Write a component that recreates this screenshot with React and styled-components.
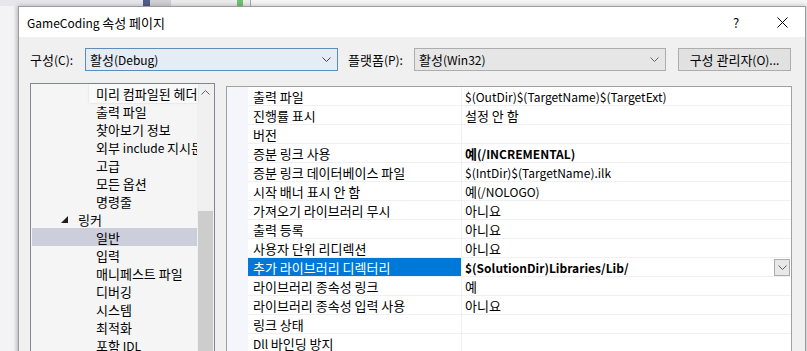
import React from "react";
import styled, { createGlobalStyle } from "styled-components";

const GlobalStyle = createGlobalStyle`
  body {
    margin: 0;
    font-family: "Noto Sans CJK KR", "Noto Sans", sans-serif;
    font-size: 12px;
    color: #000;
  }
`;

const Screen = styled.div`
  width: 807px;
  height: 351px;
  overflow: hidden;
  display: flex;
  flex-direction: column;
  background: #f1f1f4;
`;

const BackStrip = styled.div`
  height: 6px;
  flex: none;
  display: flex;
`;

const Seg = styled.div`
  width: ${(p) => p.$w}px;
  flex: ${(p) => (p.$w ? "none" : "1")};
  background: ${(p) => p.$c};
`;

const Desk = styled.div`
  flex: 1;
  display: flex;
  min-height: 0;
`;

const DeskGap = styled.div`
  width: 18px;
  flex: none;
  background: linear-gradient(90deg, #f3f3f6 0%, #f3f3f6 70%, #e2e2e6 100%);
`;

const Dialog = styled.div`
  width: 788px;
  height: 420px;
  flex: none;
  box-sizing: border-box;
  border: 1px solid #9c9c9c;
  background: #f0f0f0;
  box-shadow: 0 0 5px rgba(0, 0, 0, 0.25);
  display: flex;
  flex-direction: column;
`;

const TitleBar = styled.div`
  height: 30px;
  flex: none;
  background: #fff;
  display: flex;
  align-items: center;
  padding-left: 8px;
`;

const Title = styled.div`
  flex: 1;
`;

const TitleButton = styled.div`
  width: 46px;
  height: 30px;
  display: flex;
  align-items: center;
  justify-content: center;
  font-size: 13px;
`;

const Body = styled.div`
  padding: 11px 13px 0 11px;
  display: flex;
  flex-direction: column;
`;

const ConfigRow = styled.div`
  display: flex;
  align-items: center;
  height: 23px;
`;

const Label = styled.div`
  width: ${(p) => p.$w}px;
  flex: none;
  white-space: nowrap;
`;

const Combo = styled.div`
  width: ${(p) => p.$w}px;
  height: 23px;
  box-sizing: border-box;
  flex: none;
  border: 1px solid ${(p) => (p.$focus ? "#5f8cbd" : "#adadad")};
  background: ${(p) => (p.$focus ? "#e4ecf4" : "#e6e6e6")};
  padding: 0 6px 0 4px;
  display: flex;
  align-items: center;
  justify-content: space-between;
  margin-right: ${(p) => p.$mr || 0}px;
`;

const Button = styled.div`
  margin-left: 12px;
  width: 113px;
  height: 23px;
  box-sizing: border-box;
  border: 1px solid #adadad;
  background: #e1e1e1;
  display: flex;
  align-items: center;
  justify-content: center;
  white-space: nowrap;
`;

const Panels = styled.div`
  display: flex;
  align-items: flex-start;
  gap: 11px;
  margin-top: 12px;
`;

const Tree = styled.div`
  width: 185px;
  height: 300px;
  box-sizing: border-box;
  border: 1px solid #828790;
  background: #f5f5f5;
  display: flex;
  flex: none;
`;

const TreeList = styled.div`
  flex: 1;
  min-width: 0;
  padding-left: 1px;
  display: flex;
  flex-direction: column;
`;

const TreeRow = styled.div`
  height: 18px;
  flex: none;
  display: flex;
  align-items: center;
  white-space: nowrap;
  overflow: ${(p) => (p.$hover ? "visible" : "hidden")};
  position: relative;
  z-index: ${(p) => (p.$hover ? 2 : 0)};
  padding-left: ${(p) => p.$indent}px;
  background: ${(p) => (p.$selected ? "#cccedb" : "transparent")};
`;

const HoverBox = styled.span`
  display: flex;
  align-items: center;
  height: 19px;
  margin-left: -7px;
  padding-left: 7px;
  width: 109px;
  background: #f9f9f9;
  box-shadow: 0 0 2px rgba(0, 0, 0, 0.12);
`;

const Expander = styled.svg`
  width: 7px;
  height: 7px;
  margin-right: 10px;
`;

const ScrollBar = styled.div`
  width: 17px;
  flex: none;
  background: #f0f0f0;
  display: flex;
  flex-direction: column;
`;

const ScrollArrow = styled.div`
  height: 17px;
  flex: none;
  display: flex;
  align-items: center;
  justify-content: center;
`;

const ScrollThumb = styled.div`
  margin: 110px 1px 0;
  flex: 1;
  background: #cdcdcd;
`;

const Grid = styled.div`
  width: 566px;
  height: 300px;
  box-sizing: border-box;
  margin-top: 3px;
  border: 1px solid #a0a0a0;
  background: #fff;
  display: flex;
  flex: none;
`;

const Gutter = styled.div`
  width: 21px;
  flex: none;
  background: #f4f6fb;
`;

const GridRows = styled.div`
  flex: 1;
  display: flex;
  flex-direction: column;
`;

const PropRow = styled.div`
  height: 19px;
  flex: none;
  box-sizing: border-box;
  display: flex;
  border-bottom: 1px solid #eef0f4;
`;

const NameCell = styled.div`
  width: 214px;
  flex: none;
  box-sizing: border-box;
  padding-left: 5px;
  display: flex;
  align-items: center;
  white-space: nowrap;
  border-right: 1px solid #eef0f4;
  background: ${(p) => (p.$selected ? "#0078d7" : "transparent")};
  color: ${(p) => (p.$selected ? "#fff" : "#000")};
`;

const ValueCell = styled.div`
  flex: 1;
  padding-left: 3px;
  display: flex;
  align-items: center;
  justify-content: space-between;
  white-space: nowrap;
  font-weight: ${(p) => (p.$bold ? 700 : 400)};
`;

const DropButton = styled.div`
  width: 16px;
  height: 17px;
  box-sizing: border-box;
  margin-right: 1px;
  border: 1px solid #acacac;
  background: #e8e8e8;
  display: flex;
  align-items: center;
  justify-content: center;
`;

// hangul runs are drawn a touch larger, as Malgun Gothic sits beside Segoe UI
const Ko = styled.span`
  font-size: 13px;
`;

const HANGUL = /([\uac00-\ud7a3][\uac00-\ud7a3 ]*)/;

const Txt = ({ children }) => (
  <span>
    {String(children)
      .split(HANGUL)
      .map((part, i) => (HANGUL.test(part) ? <Ko key={i}>{part}</Ko> : part))}
  </span>
);

const Chevron = ({ color = "#444", up }) => (
  <svg width="9" height="5" viewBox="0 0 9 5">
    <path
      d={up ? "M0.5 4.5 L4.5 0.5 L8.5 4.5" : "M0.5 0.5 L4.5 4.5 L8.5 0.5"}
      fill="none"
      stroke={color}
      strokeWidth="1"
    />
  </svg>
);

const treeItems = [
  { text: "미리 컴파일된 헤더", indent: 64, hover: true },
  { text: "출력 파일", indent: 64 },
  { text: "찾아보기 정보", indent: 64 },
  { text: "외부 include 지시문", indent: 64 },
  { text: "고급", indent: 64 },
  { text: "모든 옵션", indent: 64 },
  { text: "명령줄", indent: 64 },
  { text: "링커", indent: 29, expanded: true },
  { text: "일반", indent: 64, selected: true },
  { text: "입력", indent: 64 },
  { text: "매니페스트 파일", indent: 64 },
  { text: "디버깅", indent: 64 },
  { text: "시스템", indent: 64 },
  { text: "최적화", indent: 64 },
  { text: "포함 IDL", indent: 64 },
];

const props = [
  ["출력 파일", "$(OutDir)$(TargetName)$(TargetExt)"],
  ["진행률 표시", "설정 안 함"],
  ["버전", ""],
  ["증분 링크 사용", "예(/INCREMENTAL)", true],
  ["증분 링크 데이터베이스 파일", "$(IntDir)$(TargetName).ilk"],
  ["시작 배너 표시 안 함", "예(/NOLOGO)"],
  ["가져오기 라이브러리 무시", "아니요"],
  ["출력 등록", "아니요"],
  ["사용자 단위 리디렉션", "아니요"],
  ["추가 라이브러리 디렉터리", "$(SolutionDir)Libraries/Lib/", true, true],
  ["라이브러리 종속성 링크", "예"],
  ["라이브러리 종속성 입력 사용", "아니요"],
  ["링크 상태", ""],
  ["Dll 바인딩 방지", ""],
];

export default function App() {
  return (
    <Screen>
      <GlobalStyle />
      <BackStrip>
        <Seg $w={143} $c="#e6e6ec" />
        <Seg $w={7} $c="#4f5d8e" />
        <Seg $w={21} $c="#d2d2d4" />
        <Seg $w={66} $c="#ececec" />
        <Seg $w={6} $c="#72c072" />
        <Seg $w={7} $c="#ededed" />
        <Seg $w={1} $c="#a8a8a8" />
        <Seg $c="#f5f5f5" />
      </BackStrip>
      <Desk>
        <DeskGap />
        <Dialog>
          <TitleBar>
            <Title>
              <Txt>GameCoding 속성 페이지</Txt>
            </Title>
            <TitleButton>?</TitleButton>
            <TitleButton>
              <svg width="11" height="11" viewBox="0 0 11 11">
                <path d="M0.5 0.5 L10.5 10.5 M10.5 0.5 L0.5 10.5" stroke="#000" strokeWidth="1" />
              </svg>
            </TitleButton>
          </TitleBar>
          <Body>
            <ConfigRow>
              <Label $w={55}>
                <Txt>구성(C):</Txt>
              </Label>
              <Combo $w={253} $focus $mr={10}>
                <Txt>활성(Debug)</Txt>
                <Chevron />
              </Combo>
              <Label $w={66}>
                <Txt>플랫폼(P):</Txt>
              </Label>
              <Combo $w={252}>
                <Txt>활성(Win32)</Txt>
                <Chevron color="#666" />
              </Combo>
              <Button>
                <Txt>구성 관리자(O)...</Txt>
              </Button>
            </ConfigRow>
            <Panels>
              <Tree>
                <TreeList>
                  {treeItems.map((it) => (
                    <TreeRow
                      key={it.text}
                      $indent={it.indent}
                      $selected={it.selected}
                      $hover={it.hover}
                    >
                      {it.expanded && (
                        <Expander viewBox="0 0 7 7">
                          <polygon points="7,0 7,7 0,7" fill="#1e1e1e" />
                        </Expander>
                      )}
                      {it.hover ? (
                        <HoverBox>
                          <Txt>{it.text}</Txt>
                        </HoverBox>
                      ) : (
                        <Txt>{it.text}</Txt>
                      )}
                    </TreeRow>
                  ))}
                </TreeList>
                <ScrollBar>
                  <ScrollArrow>
                    <Chevron up color="#606060" />
                  </ScrollArrow>
                  <ScrollThumb />
                </ScrollBar>
              </Tree>
              <Grid>
                <Gutter />
                <GridRows>
                  {props.map(([name, value, bold, selected]) => (
                    <PropRow key={name}>
                      <NameCell $selected={selected}>
                        <Txt>{name}</Txt>
                      </NameCell>
                      <ValueCell $bold={bold}>
                        <Txt>{value}</Txt>
                        {selected && (
                          <DropButton>
                            <Chevron color="#606060" />
                          </DropButton>
                        )}
                      </ValueCell>
                    </PropRow>
                  ))}
                </GridRows>
              </Grid>
            </Panels>
          </Body>
        </Dialog>
      </Desk>
    </Screen>
  );
}
